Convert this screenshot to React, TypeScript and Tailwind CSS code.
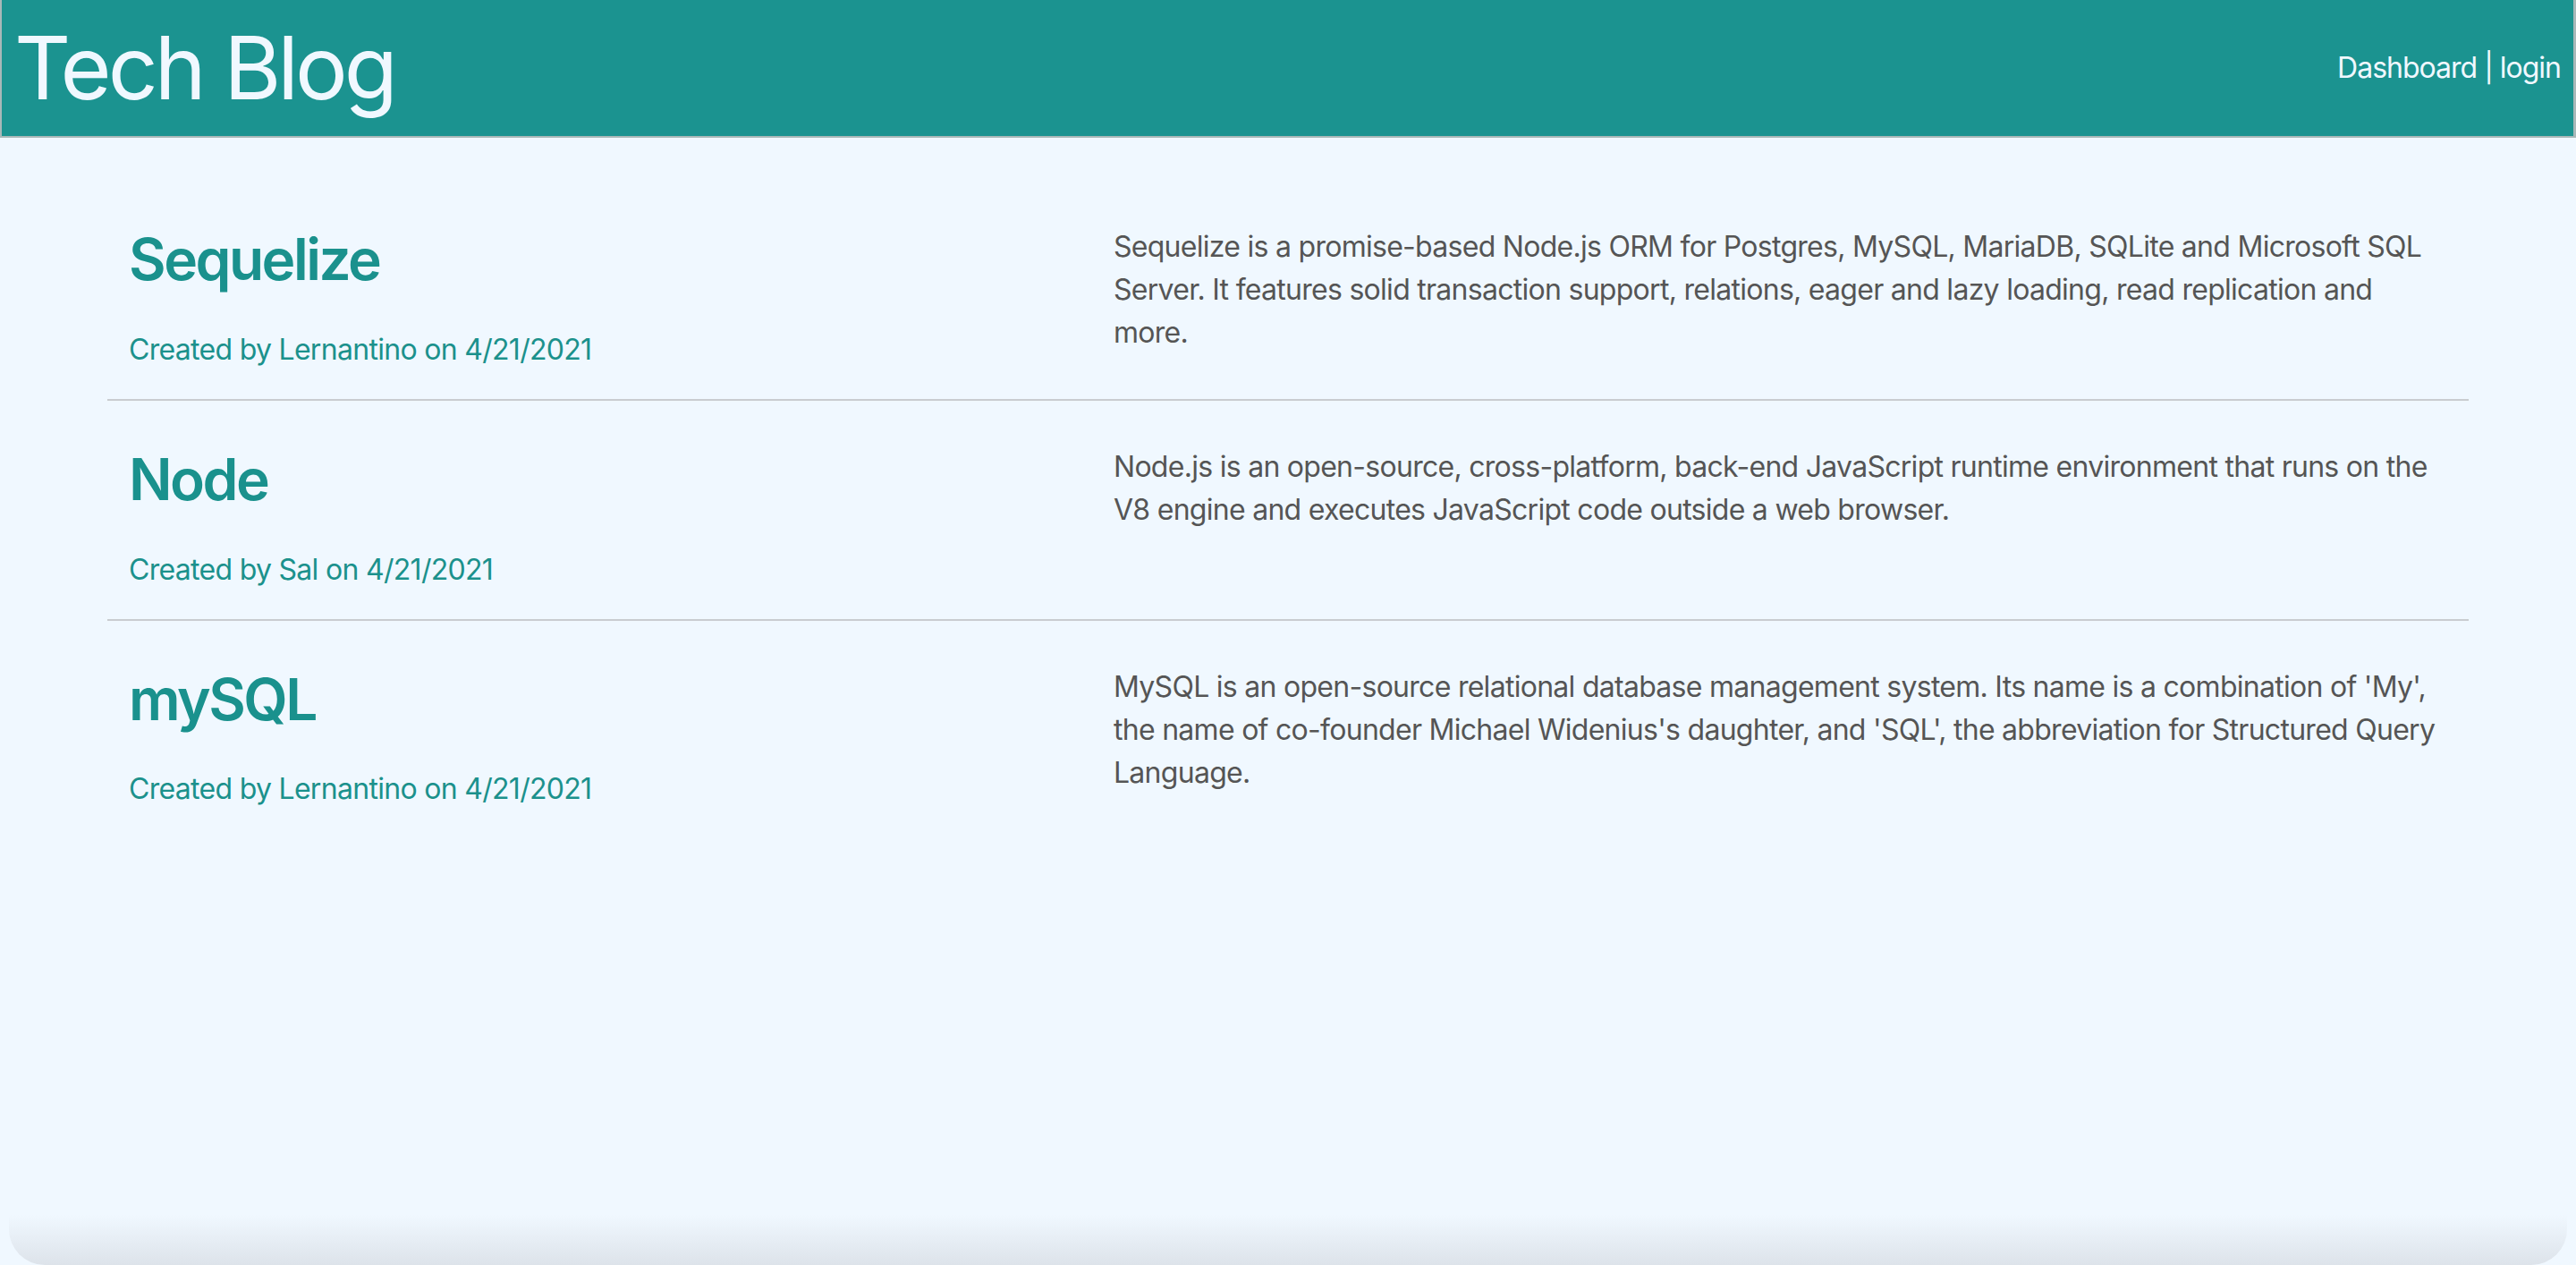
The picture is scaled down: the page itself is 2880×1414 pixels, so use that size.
import React from 'react';

interface Post {
  title: string;
  author: string;
  date: string;
  body: string;
}

const posts: Post[] = [
  {
    title: 'Sequelize',
    author: 'Lernantino',
    date: '4/21/2021',
    body: 'Sequelize is a promise-based Node.js ORM for Postgres, MySQL, MariaDB, SQLite and Microsoft SQL Server. It features solid transaction support, relations, eager and lazy loading, read replication and more.',
  },
  {
    title: 'Node',
    author: 'Sal',
    date: '4/21/2021',
    body: 'Node.js is an open-source, cross-platform, back-end JavaScript runtime environment that runs on the V8 engine and executes JavaScript code outside a web browser.',
  },
  {
    title: 'mySQL',
    author: 'Lernantino',
    date: '4/21/2021',
    body: "MySQL is an open-source relational database management system. Its name is a combination of 'My', the name of co-founder Michael Widenius's daughter, and 'SQL', the abbreviation for Structured Query Language.",
  },
];

const PostRow: React.FC<{ post: Post; last: boolean }> = ({ post, last }) => (
  <article
    className={
      last
        ? 'grid grid-cols-[1101px_1fr] items-start px-6 pt-[48px] pb-[33px]'
        : 'grid grid-cols-[1101px_1fr] items-start px-6 pt-[48px] pb-[31px] border-b-2 border-[#c9ccd0]'
    }
  >
    {/* Title + meta */}
    <div>
      <h2 className="mt-[2px] text-[64px] leading-[1.2] font-semibold tracking-[-2.5px] text-[#1a918d]">{post.title}</h2>
      <p className="mt-[38px] text-[32px] leading-[48px] tracking-[-0.7px] text-[#1b918c]">
        Created by {post.author} on {post.date}
      </p>
    </div>

    {/* Body */}
    <p className="mt-[2px] text-[32px] leading-[48px] tracking-[-0.72px] text-[#555555]">{post.body}</p>
  </article>
);

const App: React.FC = () => {
  return (
    <div
      className="min-h-screen flex flex-col bg-[#f0f8ff] overflow-hidden"
      style={{ fontFamily: 'Inter, "Noto Sans", sans-serif' }}
    >
      <header className="h-[154px] shrink-0 flex items-center justify-between bg-[#1b9390] border-l-2 border-r-[3px] border-b-2 border-[#a9b8b8] pl-[14px] pr-[14px]">
        <h1 className="text-[98px] leading-none tracking-[-4px] text-[#f0f8ff]">Tech Blog</h1>
        <nav className="text-[32px] leading-none tracking-[-1px] text-[#f0f8ff]">
          <a href="#">Dashboard</a> | <a href="#">login</a>
        </nav>
      </header>

      <main className="flex-1 mx-[120px] mt-[48px]">
        {posts.map((post, i) => (
          <PostRow key={post.title} post={post} last={i === posts.length - 1} />
        ))}
      </main>

      {/* bottom window shadow */}
      <div className="h-[56px] shrink-0 bg-gradient-to-b from-[#f0f8ff] to-[#dde3ea] rounded-b-[40px] mx-[10px]" />
    </div>
  );
};

export default App;
